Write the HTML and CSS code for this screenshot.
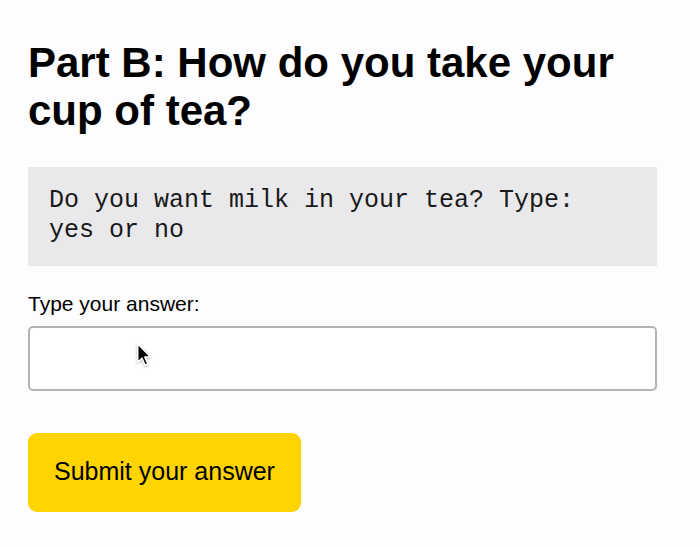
FILE: index.html
```html
<!DOCTYPE html>
<html lang="en">
<head>
<meta charset="utf-8">
<title>Part B</title>
<link rel="stylesheet" href="styles.css">
</head>
<body>
<main class="page">
  <h1 class="heading">Part B: How do you take your cup of tea?</h1>
  <div class="prompt">Do you want milk in your tea? Type: yes or no</div>
  <label class="label" for="answer">Type your answer:</label>
  <div class="field">
    <input class="input" id="answer" type="text">
    <svg class="cursor" width="18" height="27" viewBox="0 0 16 24" aria-hidden="true">
      <path d="M1.5 1.5 L1.5 18 L5.3 14.4 L8 20.6 L10.6 19.5 L7.9 13.4 L13 13.4 Z" fill="#000" stroke="#fff" stroke-width="1.4" stroke-linejoin="round"/>
    </svg>
  </div>
  <button class="submit" type="button">Submit your answer</button>
</main>
</body>
</html>
```
FILE: styles.css
```css
html, body {
  margin: 0;
  padding: 0;
  background: #fdfcfe;
}

.page {
  display: flex;
  flex-direction: column;
  align-items: flex-start;
  padding: 39px 43px 0 28px;
  font-family: "Liberation Sans", Arial, sans-serif;
  color: #0b0c0c;
}

.heading {
  margin: 0;
  font-size: 42px;
  line-height: 48px;
  font-weight: 700;
  color: #000;
  width: 100%;
}

.prompt {
  margin-top: 32px;
  align-self: stretch;
  background: #e9e9eb;
  padding: 19px 40px 20px 21px;
  font-family: "Liberation Mono", "Courier New", monospace;
  font-size: 25px;
  line-height: 30px;
  color: #1a1a1a;
}

.label {
  margin-top: 25px;
  font-size: 21px;
  line-height: 25px;
  color: #000;
}

.field {
  position: relative;
  margin-top: 10px;
  align-self: stretch;
  display: flex;
}

.input {
  flex: 1;
  height: 65px;
  box-sizing: border-box;
  border: 2px solid #b3b3b6;
  border-radius: 5px;
  background: #fff;
  font-family: "Liberation Sans", Arial, sans-serif;
  font-size: 20px;
  padding: 0 12px;
  margin: 0;
  outline: none;
}

.cursor {
  position: absolute;
  left: 108px;
  top: 16px;
  filter: drop-shadow(0 1px 1px rgba(0,0,0,0.3));
}

.submit {
  margin-top: 42px;
  background: #ffd400;
  border: none;
  border-radius: 9px;
  padding: 24px 26px 26px;
  font-family: "Liberation Sans", Arial, sans-serif;
  font-size: 25px;
  line-height: 29px;
  color: #000;
  cursor: pointer;
}
```
